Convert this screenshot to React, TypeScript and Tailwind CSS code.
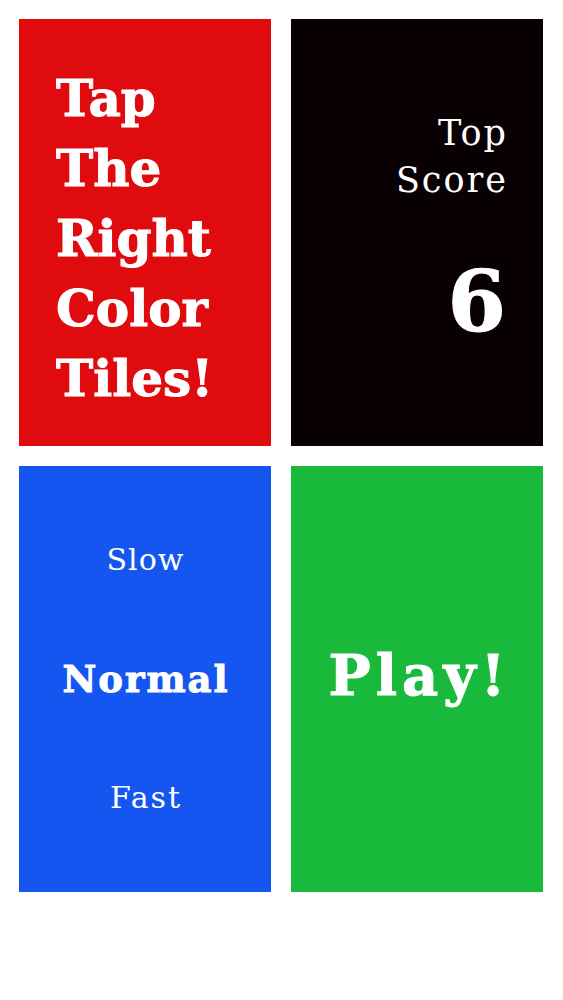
import React from 'react';

const slab = "font-['DejaVu_Serif',_'Liberation_Serif',_serif]";
// heavier strokes, closer to the typewriter bold face of the original
const heavy = 'font-bold [-webkit-text-stroke:1px_white]';

export default function App() {
  return (
    <div className={`min-h-[1000px] w-full bg-white ${slab}`}>
      <div className="grid grid-cols-2 gap-x-5 gap-y-5 pl-[19px] pr-5 pt-[19px]">
        {/* Title tile */}
        <div className="flex h-[427px] items-center bg-[#df0b0e] pl-[37px] pt-[13px]">
          <div className={`text-[50px] leading-[70px] text-white ${heavy}`}>
            <div>Tap</div>
            <div>The</div>
            <div>Right</div>
            <div>Color</div>
            <div>Tiles!</div>
          </div>
        </div>

        {/* Score tile */}
        <div className="flex h-[427px] flex-col items-end bg-[#080002] pr-[37px] pt-[91px] text-white">
          <div className="mr-[-2px] text-right text-[35px] leading-[47px] tracking-[2px]">
            Top
            <br />
            Score
          </div>
          <div className={`mt-[56px] text-[84px] leading-none ${heavy}`}>6</div>
        </div>

        {/* Speed tile */}
        <div className="flex h-[426px] flex-col items-center justify-center gap-[79px] bg-[#1556f0] text-white">
          <button className="h-10 pl-[1px] text-[30px] leading-10 tracking-[1px]">Slow</button>
          <button className={`h-10 pl-[2px] text-[37px] leading-10 tracking-[2px] ${heavy}`}>Normal</button>
          <button className="h-10 pl-[2px] text-[30px] leading-10 tracking-[2px]">Fast</button>
        </div>

        {/* Play tile */}
        <div className="flex h-[426px] items-center justify-center bg-[#19ba3c] pb-[8px]">
          <button className={`pl-[5px] text-[56px] leading-none tracking-[5px] text-white ${heavy}`}>Play!</button>
        </div>
      </div>
    </div>
  );
}
